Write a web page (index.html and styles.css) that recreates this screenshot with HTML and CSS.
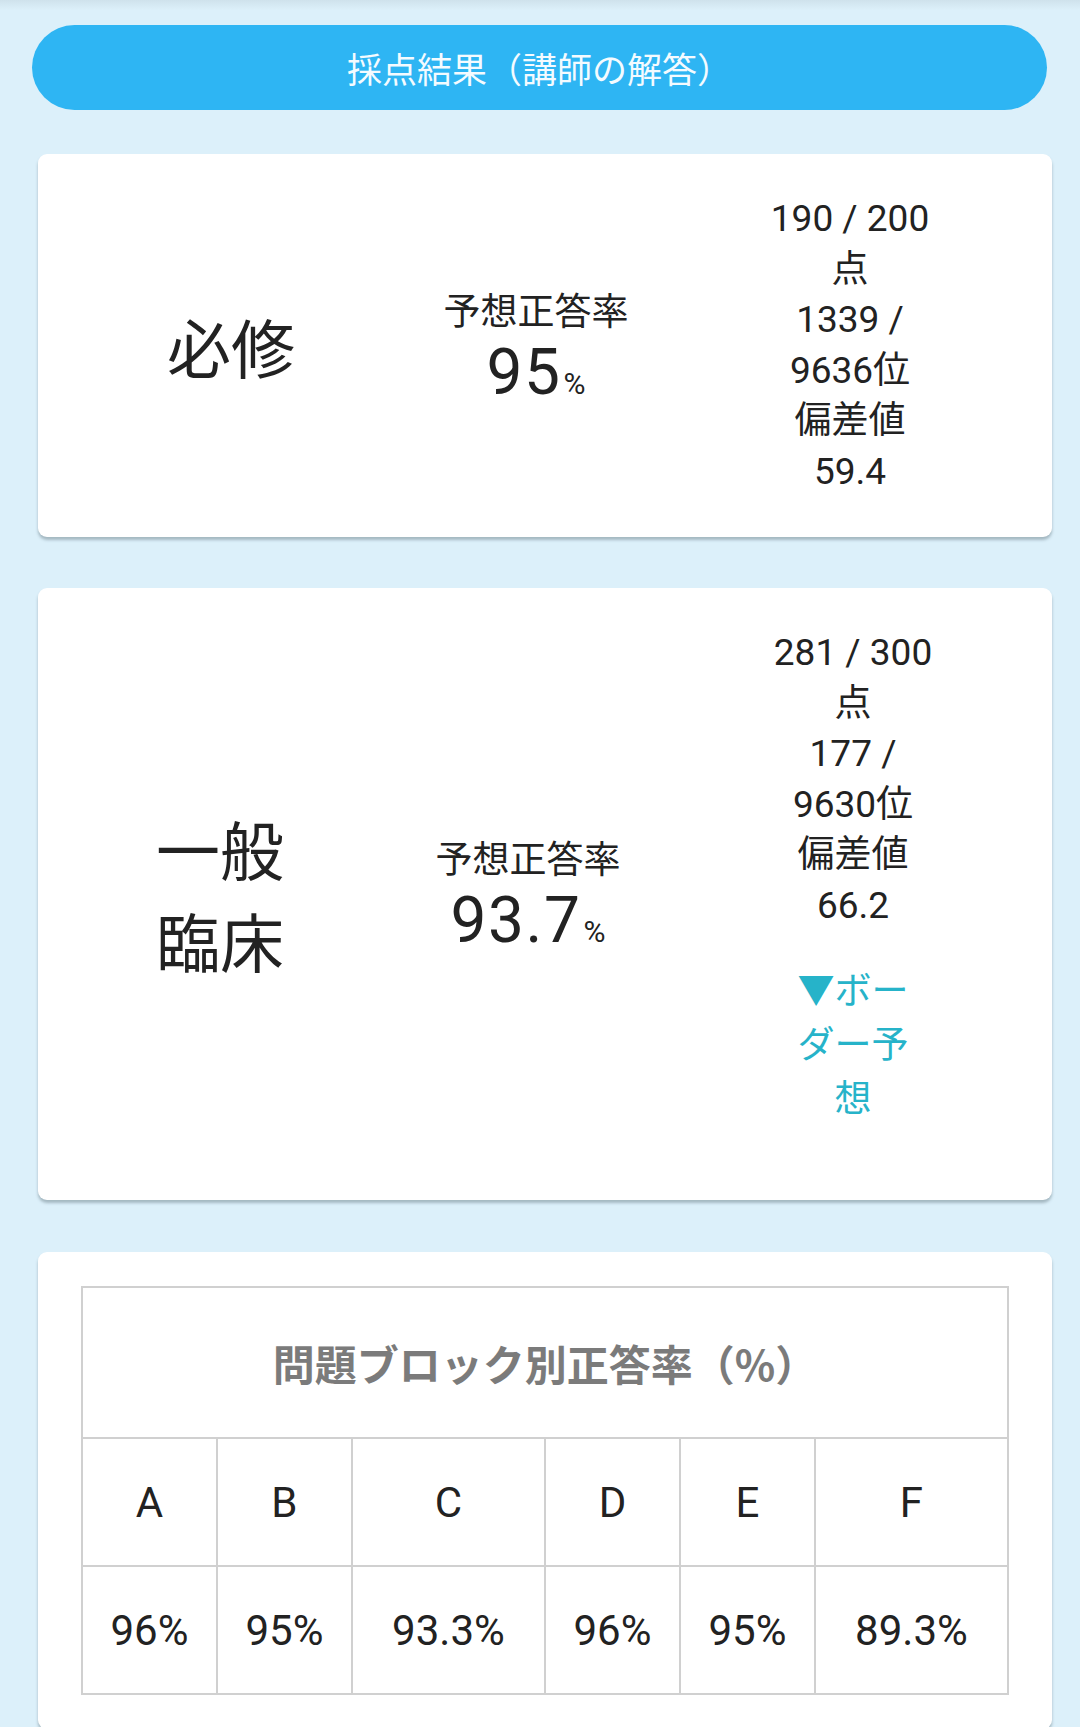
FILE: index.html
```html
<!DOCTYPE html>
<html lang="ja">
<head>
  <meta charset="UTF-8">
  <title>採点結果</title>
  <link rel="stylesheet" href="styles.css">
</head>
<body>

  <div class="page">
    <button class="result-btn">採点結果（講師の解答）</button>

    <div class="card score-card card-hisshu">
      <div class="subject">必修</div>
      <div class="rate">
        <div class="rate-label">予想正答率</div>
        <div class="rate-value">95<span class="pct">%</span></div>
      </div>
      <div class="stats">
        190 / 200<br>点<br>1339 /<br>9636位<br>偏差値<br>59.4
      </div>
    </div>

    <div class="card score-card card-ippan">
      <div class="subject">一般<br>臨床</div>
      <div class="rate">
        <div class="rate-label">予想正答率</div>
        <div class="rate-value">93.7<span class="pct">%</span></div>
      </div>
      <div class="stats">
        281 / 300<br>点<br>177 /<br>9630位<br>偏差値<br>66.2
        <a href="#" class="border-link">▼ボー<br>ダー予<br>想</a>
      </div>
    </div>

    <div class="card block-card">
      <table class="block-table">
        <tr>
          <th colspan="6" class="block-title">問題ブロック別正答率（%）</th>
        </tr>
        <tr>
          <td class="narrow">A</td>
          <td class="narrow">B</td>
          <td class="wide">C</td>
          <td class="narrow">D</td>
          <td class="narrow">E</td>
          <td class="wide">F</td>
        </tr>
        <tr>
          <td>96%</td>
          <td>95%</td>
          <td>93.3%</td>
          <td>96%</td>
          <td>95%</td>
          <td>89.3%</td>
        </tr>
      </table>
    </div>
  </div>

</body>
</html>
```

FILE: styles.css
```css
html, body { margin: 0; padding: 0; }
body { background: linear-gradient(#cfe2ec 0, #dcf0fa 10px); font-family: Roboto, "Noto Sans CJK JP", sans-serif; color: #222; min-height: 1727px; }
.page { padding: 25px 28px 0 32px; }

.result-btn { display: block; width: 1015px; height: 85px; border: none; border-radius: 43px; background: #2eb5f3; color: #f4fbff; font-family: "Noto Sans CJK JP", sans-serif; font-size: 35px; cursor: pointer; }

.card { background: #fff; border-radius: 9px; box-shadow: 0 3px 3px rgba(60, 80, 90, 0.35); margin-left: 6px; width: 1014px; }

.score-card { display: grid; align-items: center; text-align: center; padding: 40px 0; margin-top: 44px; }
.card-hisshu { grid-template-columns: 386px 224px 1fr; }
.card-ippan { grid-template-columns: 364px 252px 1fr; margin-top: 51px; }

.subject { font-size: 64px; line-height: 92px; padding-top: 12px; }

.rate { padding-top: 14px; }
.rate-label { font-size: 37px; line-height: 50px; }
.rate-value { font-size: 64px; line-height: 69px; letter-spacing: 1.5px; }
.pct { font-size: 30px; letter-spacing: 0; margin-left: 2px; }

.stats { font-size: 37px; line-height: 50.5px; }
.border-link { display: block; margin: 34px 0 33px; line-height: 54px; color: #26b3c9; text-decoration: none; }

.block-card { margin-top: 52px; padding: 34px 43px; box-sizing: border-box; }
.block-table { width: 928px; border-collapse: collapse; text-align: center; }
.block-table th, .block-table td { border: 2px solid #d0d0d0; padding: 0; }
.block-title { height: 149px; font-family: "Noto Sans CJK JP", sans-serif; font-size: 42px; font-weight: bold; color: #7b7b7b; }
.block-table td { height: 126px; font-size: 42px; }
.narrow { width: 135px; }
.wide { width: 194px; }
```
